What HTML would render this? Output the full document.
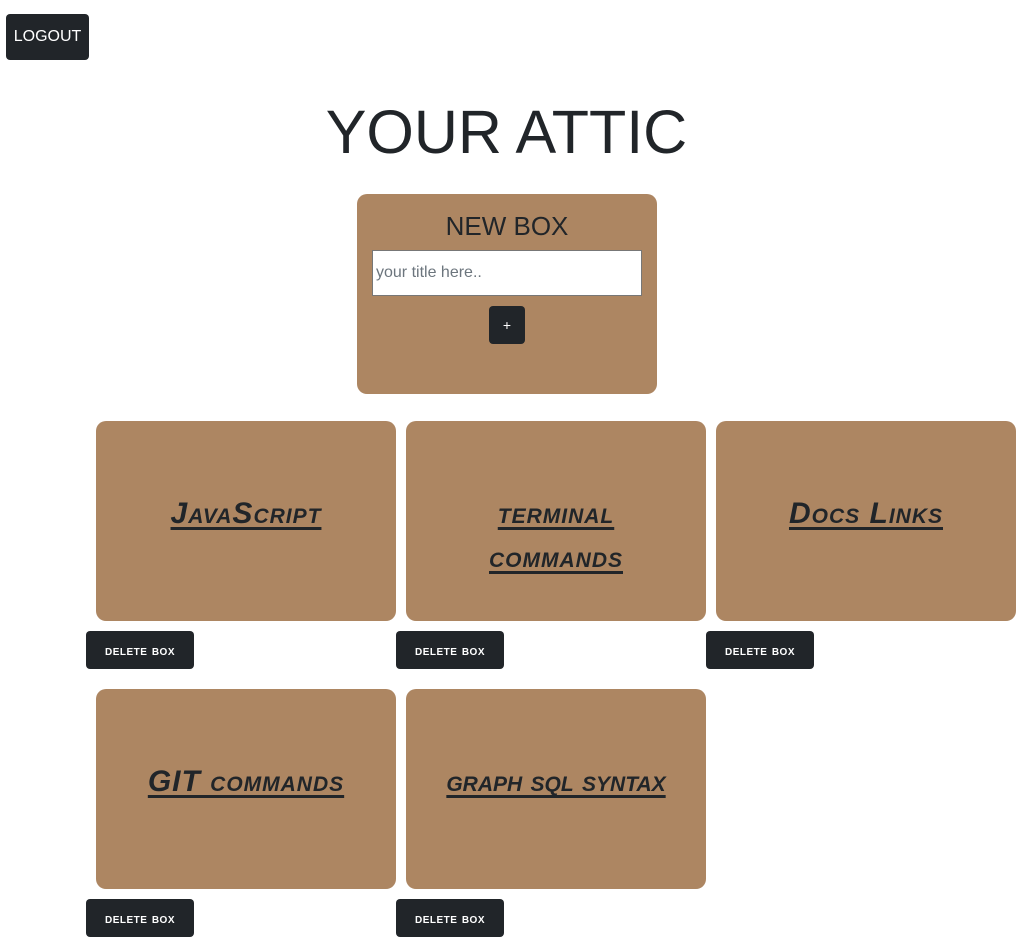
<!DOCTYPE html>
<html><head><style>
body{margin:0;width:1023px;height:949px;background:#fff;font-family:"Liberation Sans",sans-serif;position:relative;overflow:hidden}
.btn{position:absolute;background:#212529;color:#fff;border-radius:4px;display:flex;align-items:center;justify-content:center}
.card{position:absolute;width:300px;height:200px;background:#ad8662;border-radius:10px;display:flex;align-items:flex-start;justify-content:center;text-align:center;padding-top:71px;box-sizing:border-box}
.card span{font:italic bold 30px/44px "Liberation Sans",sans-serif;font-variant:small-caps;color:#212529;text-decoration:underline;text-decoration-thickness:3px;text-underline-offset:4px;letter-spacing:1px;width:220px}
.del{width:108px;height:38px;font:bold 14px "Liberation Sans",sans-serif;font-variant:small-caps;letter-spacing:.5px}
</style></head><body>
<div class="btn" style="left:6px;top:14px;width:83px;height:46px;font-size:16px">LOGOUT</div>
<div style="position:absolute;left:0;width:1013px;top:92px;text-align:center;font-size:61px;color:#212529;line-height:80px">YOUR ATTIC</div>
<div style="position:absolute;left:357px;top:194px;width:300px;height:200px;background:#ad8662;border-radius:10px">
<div style="text-align:center;font-size:26px;color:#212529;margin-top:16px;line-height:32px">NEW BOX</div>
<div style="position:absolute;left:15px;top:56px;height:46px;background:#fff;border:1px solid #777;color:#6c757d;font-size:16px;line-height:44px;padding-left:3px;box-sizing:border-box;width:270px">your title here..</div>
<div class="btn" style="left:132px;top:112px;width:36px;height:38px;font-size:14px">+</div>
</div>
<div class="card" style="left:96px;top:421px"><span>JavaScript</span></div>
<div class="card" style="left:406px;top:421px"><span>terminal commands</span></div>
<div class="card" style="left:716px;top:421px"><span>Docs Links</span></div>
<div class="card" style="left:96px;top:689px"><span style="width:280px">GIT commands</span></div>
<div class="card" style="left:406px;top:689px"><span style="width:290px;letter-spacing:0">graph sql syntax</span></div>
<div class="btn del" style="left:86px;top:631px">delete box</div>
<div class="btn del" style="left:396px;top:631px">delete box</div>
<div class="btn del" style="left:706px;top:631px">delete box</div>
<div class="btn del" style="left:86px;top:899px">delete box</div>
<div class="btn del" style="left:396px;top:899px">delete box</div>
</body></html>
